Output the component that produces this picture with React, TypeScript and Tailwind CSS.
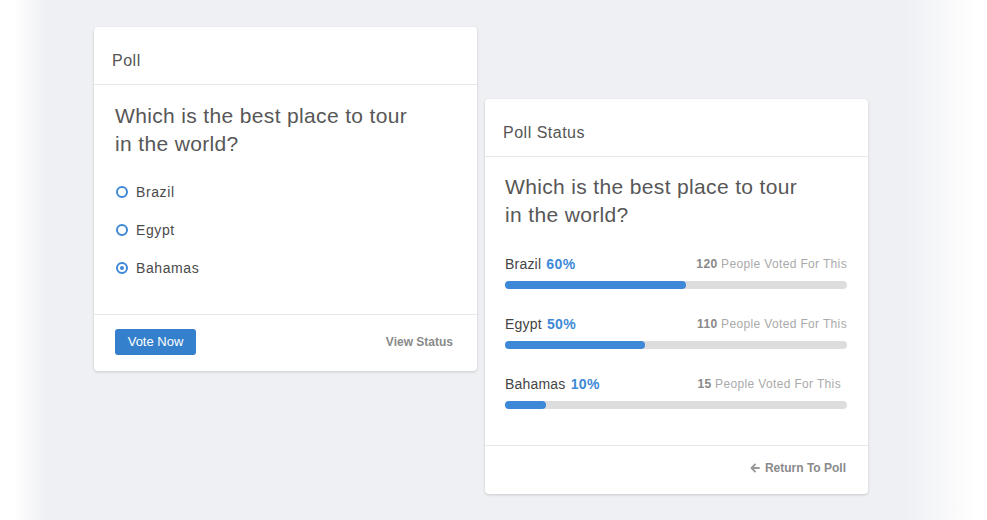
import React, { useState } from 'react';

const font = { fontFamily: '"Liberation Sans", Arial, sans-serif' };

const options = ['Brazil', 'Egypt', 'Bahamas'];

const results = [
  { name: 'Brazil', pct: '60%', votes: 120, bar: 'w-[53%]', shift: '' },
  { name: 'Egypt', pct: '50%', votes: 110, bar: 'w-[41%]', shift: '' },
  { name: 'Bahamas', pct: '10%', votes: 15, bar: 'w-[12%]', shift: 'pr-[6px]' },
];

const Card: React.FC<{ title: string; className?: string; children: React.ReactNode }> = ({ title, className, children }) => (
  <div className={`w-[383px] bg-white rounded-[4px] shadow-[0_1px_3px_rgba(0,0,0,0.16)] ${className ?? ''}`}>
    <div className="h-[58px] flex items-center pt-[10px] px-[18px] border-b border-[#e8e8ea] text-[16px] text-[#555] tracking-[0.5px]">
      {title}
    </div>
    {children}
  </div>
);

const Question = () => (
  <h2 className="text-[21px] leading-[28px] text-[#575757] font-normal tracking-[0.35px]">
    Which is the best place to tour
    <br />
    in the world?
  </h2>
);

export default function App() {
  const [choice, setChoice] = useState('Bahamas');

  return (
    <div
      style={font}
      className="w-[987px] h-[520px] overflow-hidden flex items-start gap-[8px] pl-[94px] bg-[linear-gradient(to_right,#ffffff_0px,#ffffff_14px,#eff0f4_46px,#eff0f4_905px,#ffffff_978px)]"
    >
      <Card title="Poll" className="mt-[27px]">
        <div className="pl-[21px] pr-[20px] pt-[17px] pb-[36px] border-b border-[#e8e8ea]">
          <Question />
          <div className="mt-[24px] flex flex-col gap-[18px]">
            {options.map((o) => (
              <label key={o} className="flex items-center h-[20px] cursor-pointer" onClick={() => setChoice(o)}>
                <span className="w-[12px] h-[12px] rounded-full border-2 border-[#3d89d8] flex items-center justify-center ml-[1px]">
                  {choice === o && <span className="w-[4px] h-[4px] rounded-full bg-[#3d89d8]" />}
                </span>
                <span className="ml-[8px] text-[14px] text-[#4a4a4a] tracking-[0.6px]">{o}</span>
              </label>
            ))}
          </div>
        </div>
        <div className="h-[56px] flex items-center justify-between pl-[21px] pr-[24px] pb-[2px]">
          <button className="w-[81px] h-[26px] rounded-[3px] bg-[#3580cd] text-white text-[13px]">Vote Now</button>
          <span className="text-[12px] font-bold text-[#8a8a8a]">View Status</span>
        </div>
      </Card>

      <Card title="Poll Status" className="mt-[99px]">
        <div className="pl-[20px] pr-[21px] pt-[16px] pb-[36px] border-b border-[#e8e8ea]">
          <Question />
          <div className="mt-[25px] flex flex-col gap-[25px]">
            {results.map((r) => (
              <div key={r.name}>
                <div className="flex items-center justify-between h-[20px] mb-[7px]">
                  <span className="text-[14px] text-[#444] tracking-[0.2px]">
                    {r.name} <span className="ml-[1px] font-bold text-[#3d89d8] tracking-[0.4px]">{r.pct}</span>
                  </span>
                  <span className={`text-[12px] text-[#aaa] tracking-[0.35px] ${r.shift}`}>
                    <span className="font-bold text-[#888]">{r.votes}</span> People Voted For This
                  </span>
                </div>
                <div className="h-[8px] rounded-full bg-[#dddddd]">
                  <div className={`h-full rounded-full bg-[#3d89d8] ${r.bar}`} />
                </div>
              </div>
            ))}
          </div>
        </div>
        <div className="h-[48px] flex items-center justify-end pr-[22px] pb-[4px]">
          <span className="flex items-center gap-[4px] text-[12px] font-bold text-[#8a8a8a]">
            <svg width="12" height="12" viewBox="0 0 12 12" fill="none" stroke="#999" strokeWidth="1.8" strokeLinecap="round" strokeLinejoin="round">
              <path d="M10 6H2.5M6 2.5 2.5 6 6 9.5" />
            </svg>
            Return To Poll
          </span>
        </div>
      </Card>
    </div>
  );
}
